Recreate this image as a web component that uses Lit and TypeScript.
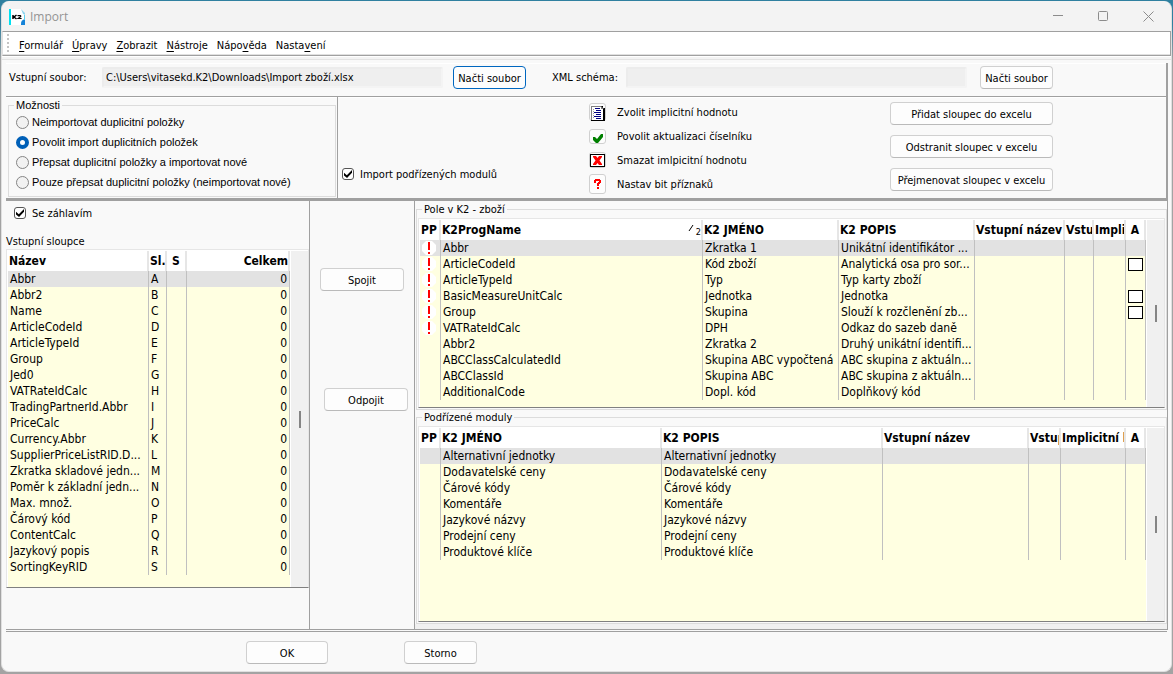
import { LitElement, html, css, svg, TemplateResult } from "lit";
import { customElement, state } from "lit/decorators.js";
import { classMap } from "lit/directives/class-map.js";

type Cell = string | TemplateResult;

interface Column {
  title: Cell;
  width?: number;
  align?: "right" | "center";
}

const MENU: [string, string, string][] = [
  ["", "F", "ormulář"],
  ["", "Ú", "pravy"],
  ["", "Z", "obrazit"],
  ["", "N", "ástroje"],
  ["Nápo", "v", "ěda"],
  ["Nasta", "v", "ení"],
];

const DUPLICATE_MODES = [
  "Neimportovat duplicitní položky",
  "Povolit import duplicitních položek",
  "Přepsat duplicitní položky a importovat nové",
  "Pouze přepsat duplicitní položky (neimportovat nové)",
];

const INPUT_COLUMNS = [
  "Abbr", "Abbr2", "Name", "ArticleCodeId", "ArticleTypeId", "Group", "Jed0",
  "VATRateIdCalc", "TradingPartnerId.Abbr", "PriceCalc", "Currency.Abbr",
  "SupplierPriceListRID.D...", "Zkratka skladové jedn...", "Poměr k základní jedn...",
  "Max. množ.", "Čárový kód", "ContentCalc", "Jazykový popis", "SortingKeyRID",
];

const FIELDS: { required?: boolean; box?: boolean; prog: string; name: string; note: string }[] = [
  { required: true, prog: "Abbr", name: "Zkratka 1", note: "Unikátní identifikátor ..." },
  { required: true, box: true, prog: "ArticleCodeId", name: "Kód zboží", note: "Analytická osa pro sor..." },
  { required: true, prog: "ArticleTypeId", name: "Typ", note: "Typ karty zboží" },
  { required: true, box: true, prog: "BasicMeasureUnitCalc", name: "Jednotka", note: "Jednotka" },
  { required: true, box: true, prog: "Group", name: "Skupina", note: "Slouží k rozčlenění zb..." },
  { required: true, prog: "VATRateIdCalc", name: "DPH", note: "Odkaz do sazeb daně" },
  { prog: "Abbr2", name: "Zkratka 2", note: "Druhý unikátní identifi..." },
  { prog: "ABCClassCalculatedId", name: "Skupina ABC vypočtená", note: "ABC skupina z aktuáln..." },
  { prog: "ABCClassId", name: "Skupina ABC", note: "ABC skupina z aktuáln..." },
  { prog: "AdditionalCode", name: "Dopl. kód", note: "Doplňkový kód" },
];

const MODULES = [
  "Alternativní jednotky", "Dodavatelské ceny", "Čárové kódy", "Komentáře",
  "Jazykové názvy", "Prodejní ceny", "Produktové klíče",
];

const requiredMark = html`<svg class="mark" width="14" height="14" viewBox="0 0 14 14" role="img" aria-label="Povinné">
  <path d="M4 0h6l4 4v6l-4 4H4l-4-4V4z" fill="#fff" />
  <path d="M6 1h2v8H6zM6 11h2v2H6z" fill="#f00" />
</svg>`;

const listIcon = svg`
  <path d="M3 3h12v2h2v13H3z" fill="#000"/>
  <path d="M3 3h10v1h1v1h1v12H4z" fill="#fff"/>
  <path d="M3 3h10v1H4v13H3z" fill="#808080"/>
  <path d="M13 3l3 3h-3z" fill="#808080"/>
  <path d="M5 6h1v1H5zM5 8h1v1H5zM5 10h1v1H5zM5 12h1v1H5zM5 14h1v1H5z" fill="#a0a0a0"/>
  <path d="M7 5h5v1H7zM8 7h5v1H8zM6 9h7v1H6zM8 11h5v1H8zM6 13h7v1H6zM8 15h5v1H8z" fill="#000080"/>`;
const checkIcon = svg`<path d="M5 8h2l2 2 4-5h2v3l-5 6H8l-3-3z" fill="#008000"/>`;
const crossIcon = svg`
  <path d="M2 2h15v13H2z" fill="#000"/><path d="M3 3h13v11H3z" fill="#fff"/>
  <path d="M5 4h3l1.500 2L11 4h3v1l-2.500 3.500L14 12v1h-3L9.500 11 8 13H5v-1l2.500-3.500L5 5z" fill="#f00"/>`;
const questionIcon = svg`
  <path d="M6 6h1V5h5v1h1v3h-1v1h-1v2H9V9h1V8h1V7H8v2H6zM9 13h2v2H9z" fill="#f00"/>`;

const ACTIONS = [
  { label: "Zvolit implicitní hodnotu", icon: listIcon, size: 18 },
  { label: "Povolit aktualizaci číselníku", icon: checkIcon, size: 15 },
  { label: "Smazat imlpicitní hodnotu", icon: crossIcon, size: 16 },
  { label: "Nastav bit příznaků", icon: questionIcon, size: 20 },
];

@customElement("app-root")
export class AppRoot extends LitElement {
  @state() private mode = 1;

  static styles = css`
    :host {
      display: block;
      box-sizing: border-box;
      min-height: 100vh;
      padding: 1px 1px 2px;
      background: linear-gradient(#2f80a0 0 24px, #a3a3a3 60px);
      font: 11px/15px "DejaVu Sans Condensed", "Liberation Sans", sans-serif;
      color: #000;
      white-space: nowrap;
    }
    * { box-sizing: border-box; }
    button, input { font: inherit; color: inherit; margin: 0; }

    .window {
      display: flex;
      flex-direction: column;
      min-height: calc(100vh - 3px);
      background: #f9f9f9;
      border: 1px solid #e0e0e0;
      border-top-color: #f3f3f3;
      border-radius: 8px;
      overflow: hidden;
    }

    .titlebar {
      display: flex;
      align-items: center;
      height: 29px;
      padding-left: 7px;
      background: #f3f3f3;
      color: #949494;
    }
    .titlebar h1 {
      flex: 1;
      margin: 0 0 0 5px;
      font: 12px/16px "Open Sans", "Noto Sans", sans-serif;
    }
    .caption {
      width: 45px;
      height: 29px;
      padding: 0;
      border: 0;
      background: none;
      display: grid;
      place-items: center;
    }

    .menu {
      display: flex;
      align-items: center;
      height: 25px;
      gap: 9px;
      padding-left: 4px;
      background: #fff;
      border: 1px solid #a0a0a0;
      border-left-color: #e0e0e0;
      box-shadow: inset 0 -1px #e0e0e0;
    }
    .grip {
      width: 2px;
      height: 20px;
      margin-right: 1px;
      background: repeating-linear-gradient(#c4c4c4 0 2px, transparent 2px 4px);
    }
    .menu button { padding: 3px 0 0; border: 0; background: none; }
    .menu u { text-underline-offset: 2px; text-decoration-thickness: 1px; }

    .rule {
      height: 7px;
      background: linear-gradient(#fff 0 1px, #f3f3f3 1px 3px, #e3e3e3 3px 4px, #f9f9f9 4px);
    }

    .files, .options { margin: 0 3px 0 4px; border-right: 2px solid #a0a0a0; }
    .files {
      display: flex;
      align-items: center;
      height: 34px;
      padding: 0 0 4px 3px;
      border-bottom: 1px solid #a0a0a0;
      box-shadow: inset 0 1px #fff;
    }
    .files label:first-child { width: 93px; }
    .files label { width: 74px; }
    .path {
      flex: 0 1 341px;
      min-width: 100px;
      height: 21px;
      padding: 0 2px;
      border: 2px solid #f2f2f2;
      border-color: #ececec #f4f4f4 #f4f4f4 #ececec;
      border-radius: 2px;
      background: #efefef;
      outline: none;
    }
    .btn {
      height: 23px;
      padding: 2px 0 0;
      border: 1px solid #d0d0d0;
      border-bottom-color: #bababa;
      border-radius: 4px;
      background: #fdfdfd;
    }
    .btn.default { border-color: #0067c0; }
    .files .btn { width: 73px; margin: 0 26px 0 10px; }
    .files .path:nth-of-type(2) + .btn { margin-left: 13px; }

    .options {
      display: flex;
      height: 104px;
      border-bottom: 3px solid #a0a0a0;
      box-shadow: inset 0 1px #fff;
    }
    .modes { width: 332px; padding: 1px 1px 2px 2px; border-right: 1px solid #a0a0a0; }
    fieldset {
      min-width: 0;
      margin: 0;
      padding: 0;
      border: 1px solid #dcdcdc;
    }
    legend { margin-left: 4px; padding: 0 2px; }
    .modes fieldset { height: 99px; padding-left: 7px; font-family: "Liberation Sans", sans-serif; }
    .modes legend { margin-left: -2px; line-height: 14px; }
    .radio, .check { display: flex; align-items: center; }
    .radio { height: 20px; gap: 3px; }
    .radio input {
      appearance: none;
      width: 13px;
      height: 13px;
      border: 1px solid #858585;
      border-radius: 50%;
      background: #f2f2f2;
    }
    .radio input:checked { border: 4px solid #0060b8; background: #fff; }
    .check { gap: 6px; }
    .check input {
      appearance: none;
      display: grid;
      place-items: center;
      width: 12px;
      height: 12px;
      border: 1px solid #555;
      border-radius: 3px;
      background: #fff;
    }
    .check input:checked::after {
      content: "";
      width: 8px;
      height: 8px;
      background: #000;
      clip-path: polygon(0 35%, 35% 65%, 100% 0, 100% 35%, 38% 100%, 0 70%);
    }
    .modules { width: 251px; padding: 62px 0 0 4px; }
    .modules .check { height: 30px; }

    .actions { width: 301px; padding-top: 3px; }
    .action { display: flex; align-items: center; gap: 11px; height: 24px; }
    .action button {
      display: grid;
      place-items: center;
      width: 17px;
      padding: 0;
      border: 1px solid #d0d0d0;
      border-radius: 3px;
      background: #fdfdfd;
    }
    .action svg { flex: none; overflow: visible; }
    .sheet { display: flex; flex-direction: column; gap: 10px; padding-top: 5px; width: 163px; }

    .main {
      flex: 1;
      display: flex;
      margin: 0 3px 0 4px;
      border-right: 1px solid #a0a0a0;
      border-bottom: 1px solid #a0a0a0;
      background: #f9f9f9;
    }
    .source { width: 303px; padding-top: 4px; }
    .source .check { height: 16px; padding-left: 8px; }
    .source h2 { margin: 14px 0 0; font: inherit; line-height: 14px; }
    .link {
      display: flex;
      flex-direction: column;
      gap: 97px;
      width: 106px;
      padding: 67px 0 0 10px;
      border: solid #a0a0a0;
      border-width: 0 1px;
    }
    .link .btn { width: 84px; }
    .link .btn + .btn { margin-left: 4px; }
    .target {
      flex: 1;
      min-width: 0;
      display: flex;
      flex-direction: column;
      padding: 1px 0 0 1px;
      border-bottom: 5px solid #f0f0f0;
    }
    .target fieldset { display: flex; flex-direction: column; padding: 1px 1px 1px 1px; }
    .target fieldset:last-child { flex: 1; }

    .grid {
      display: flex;
      flex: 1;
      border: 1px solid #e6e6e6;
      border-bottom-color: #808080;
      background: #fff;
      padding: 1px 0 0 1px;
    }
    .body { flex: 1; min-width: 0; background: #ffffe1; }
    .body.short { padding-bottom: 7px; }
    .body.tall { padding-bottom: 12px; }
    table { width: 100%; table-layout: fixed; border-collapse: separate; border-spacing: 0; font-size: 12px; }
    th, td { overflow: hidden; padding: 0; text-align: left; }
    th { height: 20px; padding-left: 1px; background: #fff; font-weight: bold; line-height: 20px; border-right: 2px solid #e6e6e6; }
    td { height: 16px; padding-left: 2px; line-height: 16px; border-right: 1px solid #c0c0c0; }
    tr.current { background: #e2e2e2; }
    .right { text-align: right; padding-right: 2px; }
    th.right { padding-right: 0; }
    .center { text-align: center; padding-left: 0; }
    .mark { display: block; margin: 1px 0; }
    .sorted { display: flex; justify-content: space-between; }
    .sorted span { font-size: 9px; font-weight: normal; padding-top: 4px; display: flex; gap: 2px; line-height: 16px; }
    .box { display: block; width: 15px; height: 13px; margin: 1px auto; border: 1px solid #000; background: #fff; }
    .scroll { width: 18px; border-left: 1px solid #fff; display: grid; place-items: center; background: #f0f0f0; }
    .scroll i { width: 2px; height: 17px; background: #858585; }

    .footer {
      display: flex;
      gap: 76px;
      height: 40px;
      margin: 1px 4px 0;
      padding: 9px 0 0 240px;
      border-top: 1px solid #a0a0a0;
    }
    .footer .btn { width: 73px; }
    .footer .btn:first-child { width: 82px; }
  `;

  private grid(label: string, columns: Column[], rows: Cell[][], size = "") {
    const cls = (i: number) => columns[i].align ?? "";
    return html`<div class="grid">
      <div class="body ${size}">
        <table aria-label=${label}>
          <colgroup>${columns.map((c) => html`<col style=${c.width ? `width:${c.width}px` : ""}>`)}</colgroup>
          <thead><tr>${columns.map((c, i) => html`<th class=${cls(i)}>${c.title}</th>`)}</tr></thead>
          <tbody>${rows.map((row, r) => html`<tr class=${classMap({ current: r === 0 })}>
            ${row.map((cell, i) => html`<td class=${cls(i)}>${cell}</td>`)}
          </tr>`)}</tbody>
        </table>
      </div>
      <div class="scroll"><i></i></div>
    </div>`;
  }

  render() {
    return html`<div class="window">
      <header class="titlebar">
        <svg width="16" height="16" viewBox="0 0 16 16" aria-hidden="true">
          <path d="M0 0h12l4 4v12H0z" fill="#fff" />
          <path d="M0 0h2v16H0z" fill="#00e0f0" />
          <path d="M12 0l4 4v2l-2-1z" fill="#8fd4ee" />
          <path d="M12 15c0-3 1-4 4-5v6h-4z" fill="#1583d8" />
          <path d="M15 6h1v5h-1z" fill="#5cd0ee" />
          <path d="M4 6v4M7.500 6L5 8l2.500 2" fill="none" stroke="#000" stroke-width="1.500" />
          <path d="M8.500 6.600h2.700c.8 0 .8 1 0 1.300L9 9.500h3.600" fill="none" stroke="#000" stroke-width="1.100" />
        </svg>
        <h1>Import</h1>
        <button class="caption" aria-label="Minimalizovat"><svg width="11" height="11"><path d="M0 4.500h10" stroke="#8c8c8c" /></svg></button>
        <button class="caption" aria-label="Maximalizovat"><svg width="11" height="11"><rect x=".5" y=".5" width="9" height="9" rx="1" fill="none" stroke="#8c8c8c" /></svg></button>
        <button class="caption" aria-label="Zavřít"><svg width="11" height="11"><path d="M.5.5l10 10M10.500.5l-10 10" stroke="#8c8c8c" /></svg></button>
      </header>

      <nav class="menu">
        <span class="grip"></span>
        ${MENU.map(([a, key, b]) => html`<button>${a}<u>${key}</u>${b}</button>`)}
      </nav>
      <div class="rule"></div>

      <section class="files">
        <label for="source">Vstupní soubor:</label>
        <input class="path" id="source" readonly value="C:\\Users\\vitasekd.K2\\Downloads\\Import zboží.xlsx">
        <button class="btn default">Načti soubor</button>
        <label for="schema">XML schéma:</label>
        <input class="path" id="schema" readonly>
        <button class="btn">Načti soubor</button>
      </section>

      <section class="options">
        <div class="modes">
          <fieldset>
            <legend>Možnosti</legend>
            ${DUPLICATE_MODES.map((text, i) => html`<label class="radio">
              <input type="radio" name="mode" .checked=${this.mode === i} @change=${() => (this.mode = i)}>${text}
            </label>`)}
          </fieldset>
        </div>
        <div class="modules">
          <label class="check"><input type="checkbox" checked>Import podřízených modulů</label>
        </div>
        <div class="actions">
          ${ACTIONS.map((a, i) => html`<div class="action">
            <button id="action${i}" aria-label=${a.label} style="height:${a.size}px">
              <svg width="15" height=${a.size - 2} viewBox="2 1 15 ${a.size - 2}">${a.icon}</svg>
            </button>
            <label for="action${i}">${a.label}</label>
          </div>`)}
        </div>
        <div class="sheet">
          <button class="btn">Přidat sloupec do excelu</button>
          <button class="btn">Odstranit sloupec v excelu</button>
          <button class="btn">Přejmenovat sloupec v excelu</button>
        </div>
      </section>

      <main class="main">
        <section class="source">
          <label class="check"><input type="checkbox" checked>Se záhlavím</label>
          <h2>Vstupní sloupce</h2>
          ${this.grid(
            "Vstupní sloupce",
            [{ title: "Název" }, { title: "Sl.", width: 18 }, { title: "S", width: 20, align: "center" }, { title: "Celkem", width: 103, align: "right" }],
            INPUT_COLUMNS.map((name, i) => [name, String.fromCharCode(65 + i), "", "0"]),
            "tall",
          )}
        </section>

        <section class="link">
          <button class="btn">Spojit</button>
          <button class="btn">Odpojit</button>
        </section>

        <section class="target">
          <fieldset>
            <legend>Pole v K2 - zboží</legend>
            ${this.grid(
              "Pole v K2 - zboží",
              [
                { title: "PP", width: 21 },
                { title: html`<div class="sorted">K2ProgName<span><svg width="6" height="8" aria-hidden="true"><path d="M1 7L5 1" stroke="#000" /></svg>2</span></div>` },
                { title: "K2 JMÉNO", width: 136 },
                { title: "K2 POPIS", width: 136 },
                { title: "Vstupní název", width: 90 },
                { title: "Vstupní", width: 29 },
                { title: "Implicitní", width: 32 },
                { title: "A", width: 20, align: "center" },
              ],
              FIELDS.map((f) => [
                f.required ? requiredMark : "", f.prog, f.name, f.note, "", "", "",
                f.box ? html`<span class="box"></span>` : "",
              ]),
              "short",
            )}
          </fieldset>
          <fieldset>
            <legend>Podřízené moduly</legend>
            ${this.grid(
              "Podřízené moduly",
              [
                { title: "PP", width: 21 },
                { title: "K2 JMÉNO" },
                { title: "K2 POPIS" },
                { title: "Vstupní název", width: 146 },
                { title: "Vstupní", width: 32 },
                { title: "Implicitní hodnota", width: 65 },
                { title: "A", width: 20, align: "center" },
              ],
              MODULES.map((m) => ["", m, m, "", "", "", ""]),
            )}
          </fieldset>
        </section>
      </main>

      <footer class="footer">
        <button class="btn">OK</button>
        <button class="btn">Storno</button>
      </footer>
    </div>`;
  }
}
